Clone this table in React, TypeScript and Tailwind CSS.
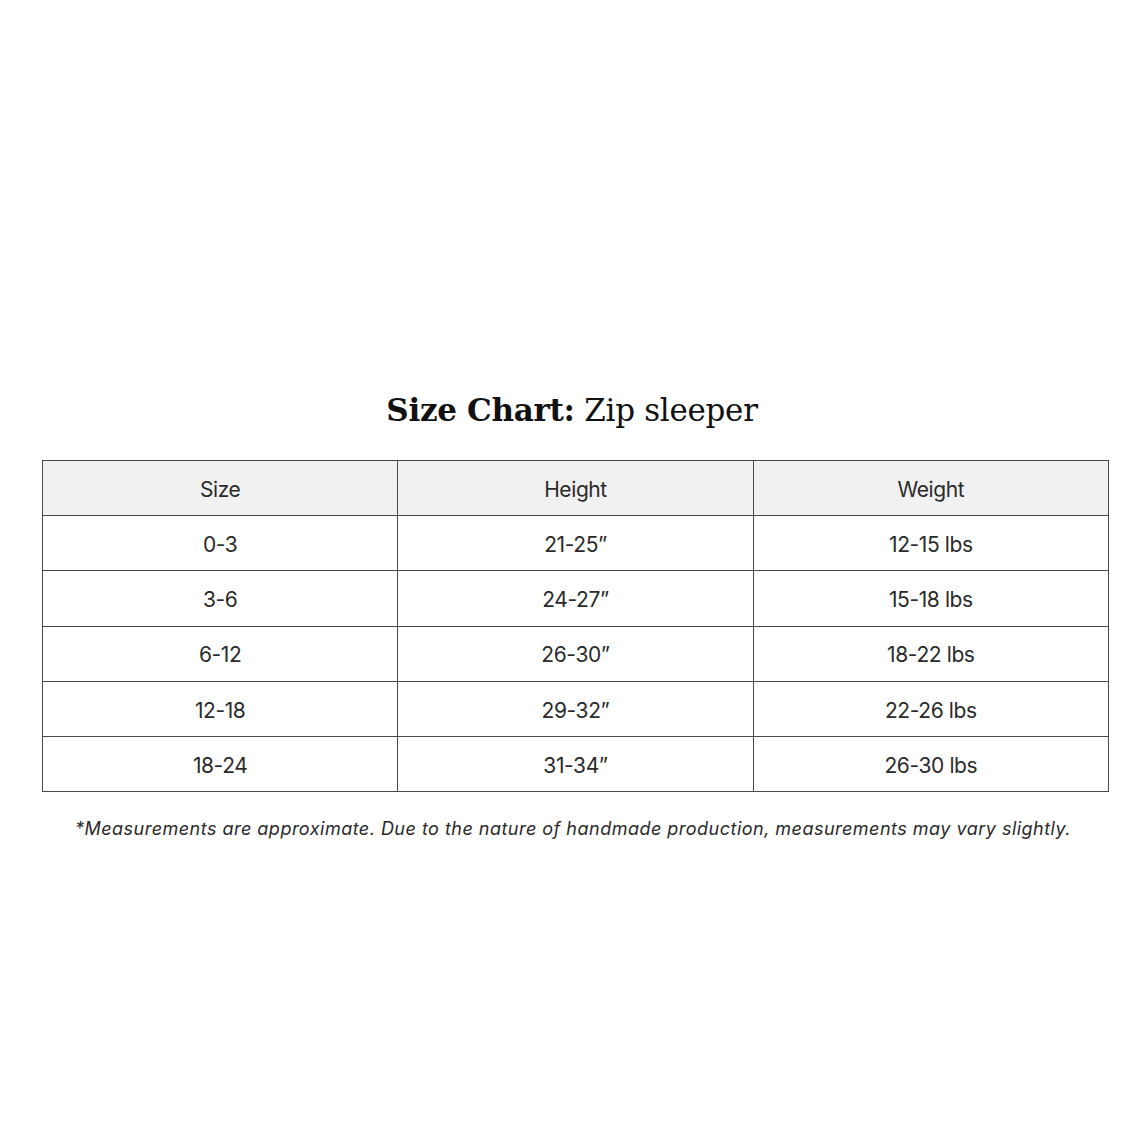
const rows = [
  ['0-3', '21-25”', '12-15 lbs'],
  ['3-6', '24-27”', '15-18 lbs'],
  ['6-12', '26-30”', '18-22 lbs'],
  ['12-18', '29-32”', '22-26 lbs'],
  ['18-24', '31-34”', '26-30 lbs'],
]

export default function App() {
  return (
    <div className="w-[1144px] h-[1144px] bg-white flex flex-col items-center pt-[388px]">
      <h1 className="text-[31px] leading-[44px] text-[#111] font-['DejaVu_Serif',serif] tracking-[-0.3px]">
        <span className="font-bold">Size Chart:</span> Zip sleeper
      </h1>

      <table className="mt-[28px] w-[1067px] ml-[7px] border-collapse font-['Inter',sans-serif] text-[21px] text-[#2a2a2a] tracking-[-0.4px]">
        <thead>
          <tr className="bg-[#f1f1f1] h-[55.2px]">
            <th className="font-normal border-[1.5px] border-[#4a4a4a] w-1/3 pt-[3px]">Size</th>
            <th className="font-normal border-[1.5px] border-[#4a4a4a] w-1/3 pt-[3px]">Height</th>
            <th className="font-normal border-[1.5px] border-[#4a4a4a] w-1/3 pt-[3px]">Weight</th>
          </tr>
        </thead>
        <tbody>
          {rows.map((r) => (
            <tr key={r[0]} className="h-[55.2px]">
              {r.map((c, i) => (
                <td key={i} className="border-[1.5px] border-[#4a4a4a] text-center pt-[3px]">{c}</td>
              ))}
            </tr>
          ))}
        </tbody>
      </table>

      <p className="mt-[23px] ml-[2px] italic text-[18px] text-[#2a2a2a] font-['Inter',sans-serif] tracking-[0.48px]">
        *Measurements are approximate. Due to the nature of handmade production, measurements may vary slightly.
      </p>
    </div>
  )
}
